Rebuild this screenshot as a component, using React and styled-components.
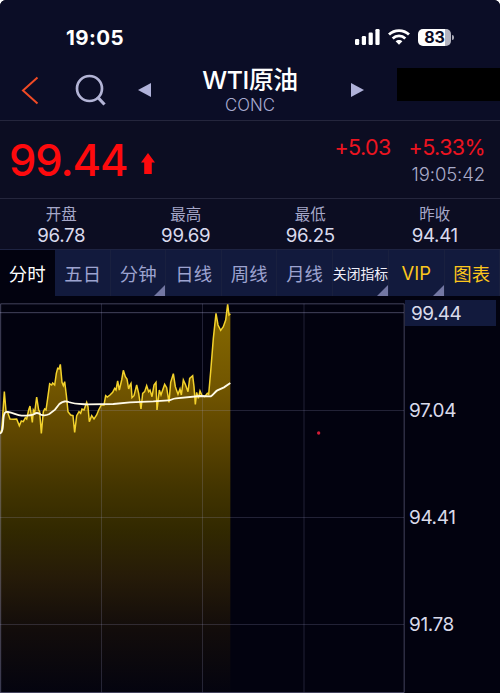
import React from "react";
import styled, { createGlobalStyle } from "styled-components";

const GlobalStyle = createGlobalStyle`
  * {
    box-sizing: border-box;
  }
  body {
    margin: 0;
    background: #fff;
    font-family: Inter, "Noto Sans CJK SC", sans-serif;
  }
`;

const Screen = styled.div`
  display: flex;
  flex-direction: column;
  width: 500px;
  height: 693px;
  overflow: hidden;
  border-radius: 6px 6px 0 0;
  background: #02020f;
`;

const StatusBar = styled.div`
  display: flex;
  justify-content: space-between;
  align-items: center;
  height: 60px;
  padding: 14px 46px 0 66px;
  background: #0b0d26;
`;

const Clock = styled.div`
  color: #fff;
  font-size: 20.5px;
  font-weight: 700;
  letter-spacing: 0.4px;
`;

const StatusIcons = styled.div`
  display: flex;
  align-items: center;
  gap: 8px;
`;

const Battery = styled.div`
  display: flex;
  align-items: center;
  gap: 1px;

  &::after {
    content: "";
    width: 2px;
    height: 5px;
    border-radius: 0 2px 2px 0;
    background: #a9a9b6;
  }
`;

const BatteryLevel = styled.div`
  width: 33px;
  height: 17px;
  border-radius: 5px;
  background: linear-gradient(90deg, #fff 83%, #b4b4c0 83%);
  color: #0b0d26;
  font-size: 16px;
  font-weight: 700;
  line-height: 17px;
  text-align: center;
`;

const NavBar = styled.div`
  display: flex;
  align-items: center;
  height: 61px;
  border-bottom: 1px solid #25263d;
  background: #0b0d26;

  svg {
    display: block;
    flex: none;
  }
`;

const NavLeft = styled.div`
  display: flex;
  align-items: center;
  width: 180px;
  padding-left: 21px;
`;

const NavTitle = styled.div`
  width: 140px;
  text-align: center;
`;

const Symbol = styled.div`
  padding-top: 1px;
  color: #fff;
  font-size: 24.8px;
  font-weight: 500;
  line-height: 29px;
  letter-spacing: -0.4px;
  white-space: nowrap;
`;

const Exchange = styled.div`
  color: #a9abd0;
  font-size: 16.8px;
  font-weight: 300;
  line-height: 20px;
`;

const NavRight = styled.div`
  display: flex;
  flex: 1;
  align-items: center;
  justify-content: space-between;
  padding-left: 30px;
`;

const Redacted = styled.div`
  width: 103px;
  height: 33px;
  margin-bottom: 11px;
  background: #000;
`;

const Quote = styled.div`
  display: flex;
  justify-content: space-between;
  height: 78px;
  padding: 0 15px 0 9px;
  border-bottom: 1px solid #25263d;
  background: #0c0d22;
  color: #fe0a0d;
`;

const LastPrice = styled.div`
  display: flex;
  align-items: center;
  gap: 14px;
  font-size: 43.5px;
  font-weight: 500;
  letter-spacing: -1.1px;

  svg {
    margin-top: 9px;
  }
`;

const Change = styled.div`
  display: flex;
  flex-direction: column;
  align-items: flex-end;
  padding-top: 12px;
`;

const ChangeValues = styled.div`
  display: flex;
  gap: 18px;
  color: #ec1420;
  font-size: 21.5px;
  line-height: 28px;
  letter-spacing: -0.6px;
`;

const QuoteTime = styled.div`
  color: #a9abc8;
  font-size: 18.5px;
  font-weight: 300;
  line-height: 26px;
  letter-spacing: -0.1px;
`;

const Stats = styled.div`
  display: grid;
  grid-template-columns: repeat(4, 1fr);
  height: 51px;
  padding: 4px 2px 0 0;
  border-bottom: 1px solid #1e2342;
  background: #0c0d22;
  text-align: center;
`;

const StatLabel = styled.div`
  padding: 1px 2px 0 0;
  color: #a5a7c8;
  font-size: 15.5px;
  line-height: 21px;
`;

const StatValue = styled.div`
  padding-right: 2px;
  color: #dadbee;
  font-size: 18.7px;
  line-height: 22px;
  letter-spacing: -0.3px;
`;

const Tabs = styled.div`
  display: grid;
  grid-template-columns: repeat(9, 1fr);
  height: 46px;
`;

const tabColors = { active: "#fff", plain: "#9da3d0", light: "#f0f0fa", gold: "#fdc61c" };

const Tab = styled.div`
  position: relative;
  display: flex;
  align-items: center;
  justify-content: center;
  border-right: 1px solid ${({ $kind }) => ($kind === "active" ? "#02020f" : "#19203f")};
  background: ${({ $kind }) => ($kind === "active" ? "#02020f" : "#121a3d")};
  color: ${({ $kind }) => tabColors[$kind]};
  font-size: ${({ $small }) => ($small ? "13.8px" : "18.4px")};
  white-space: nowrap;
`;

const MoreMark = styled.span`
  position: absolute;
  right: 0;
  bottom: 0;
  border-bottom: 11px solid #7377a3;
  border-left: 11px solid transparent;
`;

const ChartArea = styled.div`
  display: flex;
  height: 397px;
`;

const Plot = styled.svg`
  display: block;
  width: 405px;
  height: 397px;
`;

const Axis = styled.div`
  display: flex;
  flex-direction: column;
  gap: 81px;
  width: 91px;
  padding-top: 4px;
`;

const AxisLabel = styled.div`
  height: 26px;
  padding-left: ${({ $current }) => ($current ? "6px" : "4px")};
  background: ${({ $current }) => ($current ? "#121a3d" : "transparent")};
  color: #d9daea;
  font-size: 19px;
  line-height: 27px;
  letter-spacing: ${({ $current }) => ($current ? "-0.6px" : "-0.4px")};

  &:first-child {
    margin-bottom: -10px;
  }
`;

const stats = [
  { label: "开盘", value: "96.78" },
  { label: "最高", value: "99.69" },
  { label: "最低", value: "96.25" },
  { label: "昨收", value: "94.41" },
];

const tabs = [
  { label: "分时", kind: "active" },
  { label: "五日", kind: "plain" },
  { label: "分钟", kind: "plain", more: true },
  { label: "日线", kind: "plain" },
  { label: "周线", kind: "plain" },
  { label: "月线", kind: "plain" },
  { label: "关闭指标", kind: "light", more: true, small: true },
  { label: "VIP", kind: "gold", more: true },
  { label: "图表", kind: "gold" },
];

const levels = ["99.44", "97.04", "94.41", "91.78"];

// Plot units are a third of a pixel.
const pricePoints =
  "0,415 5,405 9,350 13,290 18,348 24,355 30,372 40,373 50,372 58,392 64,378 70,380 76,368 80,372 86,345 90,333 " +
  "97,382 100,345 104,352 110,306 116,345 119,350 124,415 130,350 134,342 138,345 143,310 149,266 155,270 158,264 " +
  "164,270 169,235 173,220 177,222 181,208 186,262 190,272 194,260 199,300 204,350 212,360 219,362 224,412 230,362 " +
  "237,350 242,355 246,342 252,345 260,322 264,335 268,380 275,362 282,372 290,360 296,345 304,330 312,330 317,302 " +
  "322,306 330,300 338,292 344,280 348,285 353,258 358,285 365,255 370,226 376,245 381,252 386,282 390,270 393,265 " +
  "396,308 402,302 410,270 416,295 423,342 428,295 434,290 440,272 446,290 450,285 456,305 462,270 468,262 471,345 " +
  "478,285 483,300 494,268 500,278 507,322 512,262 520,236 526,275 534,298 540,282 544,300 550,255 556,268 564,290 " +
  "569,250 578,242 582,275 586,328 590,292 595,310 600,288 606,302 614,305 622,295 626,298 632,230 640,130 648,55 " +
  "654,90 662,106 670,95 677,75 683,28 687,60 691,56";

const averagePath =
  "M0 415C8 415 9 395 10 375C12 350 16 350 24 351C40 353 50 361 65 362C80 362 98 361 103 357C112 350 116 355 122 359" +
  "C130 362 142 360 148 357L165 344L178 327C188 318 200 318 206 321C222 327 240 327 260 328L340 327L390 322L460 319" +
  "L505 316C515 316 515 311 528 310L600 303L632 304C640 300 645 290 652 286L672 277L691 264";

const PriceChart = () => (
  <Plot viewBox="0 3 1215 1191">
    <defs>
      <linearGradient id="fill" gradientUnits="userSpaceOnUse" x1="0" y1="28" x2="0" y2="1192">
        <stop offset="0" stopColor="#876a00" />
        <stop offset="0.22" stopColor="#715500" />
        <stop offset="0.34" stopColor="#5d4500" />
        <stop offset="0.46" stopColor="#453600" />
        <stop offset="0.58" stopColor="#322900" />
        <stop offset="0.7" stopColor="#261b08" />
        <stop offset="0.84" stopColor="#120c0b" />
        <stop offset="1" stopColor="#04040f" />
      </linearGradient>
    </defs>
    <polygon points={`${pricePoints} 691,1192 0,1192`} fill="url(#fill)" />
    <g stroke="#a5a5d0" strokeOpacity="0.2" strokeWidth="3">
      <path d="M304.500 26V1192M607.500 26V1192M912 26V1192M0 346.500H1212M0 667.500H1212M0 988.500H1212" />
      <path d="M0 53H1212" strokeOpacity="0.4" />
      <path d="M2 1192V26.500H1212.500V1192.500H0" fill="none" strokeOpacity="0.4" />
    </g>
    <polyline points={pricePoints} fill="none" stroke="#f3d22c" strokeWidth="4.500" />
    <path d={averagePath} fill="none" stroke="#fffbe8" strokeWidth="5.500" />
    <circle cx="956" cy="414" r="5" fill="#d31c36" />
  </Plot>
);

const App = () => {
  return (
    <>
      <GlobalStyle />
      <Screen>
        <StatusBar>
          <Clock>19:05</Clock>
          <StatusIcons>
            <svg width="25" height="16" viewBox="0 0 25 16" fill="#fff">
              <rect x="0" y="10" width="4.200" height="6" rx="1.200" />
              <rect x="6.800" y="7" width="4.200" height="9" rx="1.200" />
              <rect x="13.600" y="3.500" width="4.200" height="12.500" rx="1.200" />
              <rect x="20.400" y="0" width="4.200" height="16" rx="1.200" />
            </svg>
            <svg width="22" height="16" viewBox="0 0 22 16" fill="none" stroke="#fff" strokeWidth="2.800">
              <path d="M1 5.600C6.500 .2 15.500 .2 21 5.600" />
              <path d="M4.700 9.400C8.200 6 13.800 6 17.300 9.400" />
              <path d="M7.600 12.300C9.500 10.500 12.500 10.500 14.400 12.300L11 15.800Z" fill="#fff" stroke="none" />
            </svg>
            <Battery>
              <BatteryLevel>83</BatteryLevel>
            </Battery>
          </StatusIcons>
        </StatusBar>

        <NavBar>
          <NavLeft>
            <svg width="54" height="32" viewBox="0 0 54 32" fill="none" stroke="#ef4a25" strokeWidth="2">
              <path d="M16.500 3.500L2 16.500L16.500 29.500" />
            </svg>
            <svg width="62" height="34" viewBox="0 0 62 34" fill="none" stroke="#b3b4d6" strokeWidth="2.700">
              <circle cx="14.500" cy="15.500" r="12.500" />
              <path d="M22.500 24L29.500 31.500" strokeWidth="3.200" />
            </svg>
            <svg width="14" height="16" viewBox="0 0 14 16" fill="#b0b2da">
              <path d="M1 8L14 1V15Z" />
            </svg>
          </NavLeft>
          <NavTitle>
            <Symbol>WTI原油</Symbol>
            <Exchange>CONC</Exchange>
          </NavTitle>
          <NavRight>
            <svg width="14" height="16" viewBox="0 0 14 16" fill="#b0b2da">
              <path d="M14 8L1 1V15Z" />
            </svg>
            <Redacted />
          </NavRight>
        </NavBar>

        <Quote>
          <LastPrice>
            99.44
            <svg width="14" height="22" viewBox="0 0 14 22" fill="currentColor">
              <path d="M7 0L14 9.500H10.800V21H3.200V9.500H0Z" />
            </svg>
          </LastPrice>
          <Change>
            <ChangeValues>
              <span>+5.03</span>
              <span>+5.33%</span>
            </ChangeValues>
            <QuoteTime>19:05:42</QuoteTime>
          </Change>
        </Quote>

        <Stats>
          {stats.map((item) => (
            <div key={item.label}>
              <StatLabel>{item.label}</StatLabel>
              <StatValue>{item.value}</StatValue>
            </div>
          ))}
        </Stats>

        <Tabs>
          {tabs.map((tab) => (
            <Tab key={tab.label} $kind={tab.kind} $small={tab.small}>
              {tab.label}
              {tab.more && <MoreMark />}
            </Tab>
          ))}
        </Tabs>

        <ChartArea>
          <PriceChart />
          <Axis>
            {levels.map((level, index) => (
              <AxisLabel key={level} $current={index === 0}>
                {level}
              </AxisLabel>
            ))}
          </Axis>
        </ChartArea>
      </Screen>
    </>
  );
};

export default App;
